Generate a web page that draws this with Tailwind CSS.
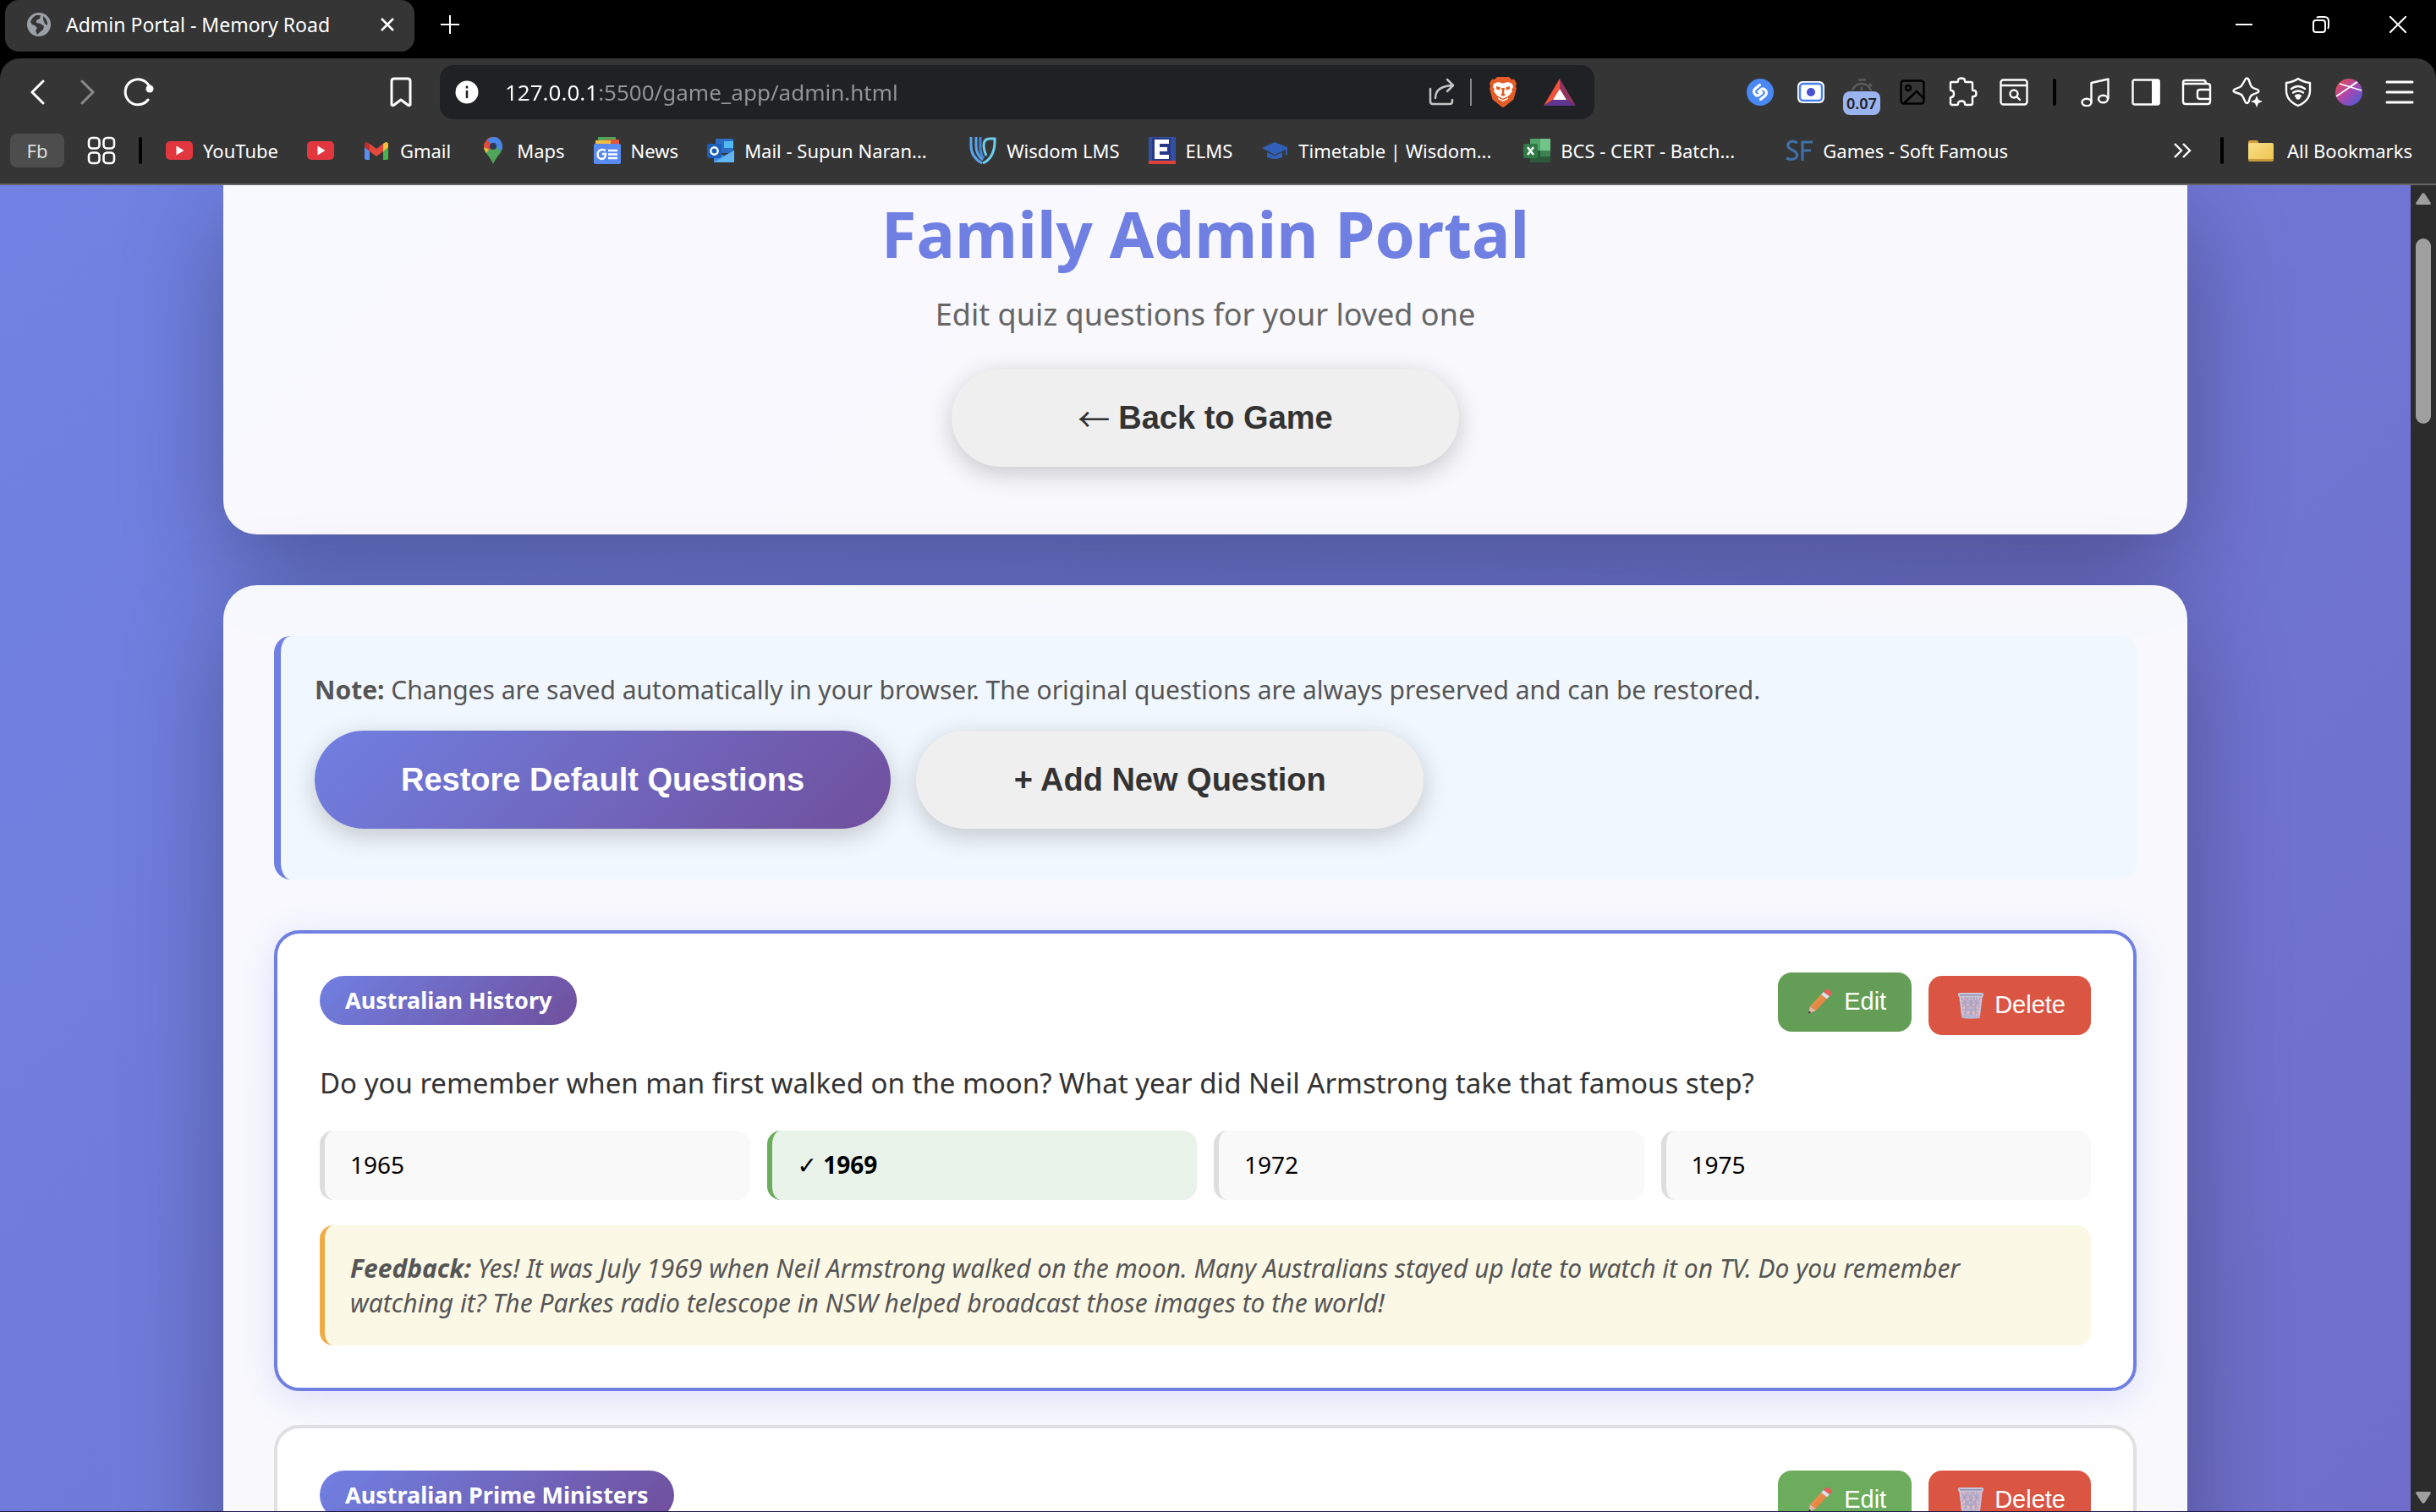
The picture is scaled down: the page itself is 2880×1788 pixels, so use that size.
<!DOCTYPE html>
<html lang="en">
<head>
<meta charset="utf-8">
<title>Admin Portal - Memory Road</title>
<script src="https://cdn.jsdelivr.net/npm/@tailwindcss/browser@4"></script>
</head>
<body class="flex h-screen flex-col overflow-hidden bg-black font-['Noto_Sans',sans-serif]">

<!-- shared symbols -->
<svg class="absolute size-0" aria-hidden="true">
  <defs>
    <linearGradient id="pencilBody" x1="0" y1="0" x2="1" y2="1"><stop offset="0" stop-color="#f09a55"/><stop offset="1" stop-color="#de7a3a"/></linearGradient>
    <linearGradient id="folderFill" x1="0" y1="0" x2="1" y2="1"><stop offset="0" stop-color="#f8e08a"/><stop offset="1" stop-color="#edc44e"/></linearGradient>
    <linearGradient id="leoFill" x1="0" y1="0" x2="1" y2="1"><stop offset="0" stop-color="#e8503a"/><stop offset=".45" stop-color="#b445a8"/><stop offset="1" stop-color="#3a60e0"/></linearGradient>
    <symbol id="pencil" viewBox="0 0 40 32">
      <path d="M6 30l2-9 7 5z" fill="#e6b4a6"/><path d="M6 30l.8-3.6 2.6 1.9z" fill="#333"/>
      <path d="M8 21L21 7l7 5-13 14z" fill="url(#pencilBody)"/>
      <path d="M21 7l3-3 7 5-3 3.200z" fill="#dfe0f2"/>
      <path d="M24 4l2-2.500q2-1.500 5 .5t3 5L31 9z" fill="#e5605a"/>
    </symbol>
    <symbol id="trash" viewBox="0 0 40 32">
      <path d="M7 4l3 25q10 3 20 0l3-25z" fill="#e3b9c3"/>
      <path d="M9 7l14 22M15 6l13 20M22 6l9 13M31 7L17 29M25 6L12 26M18 6L9 19M13 5l2 25M27 5l-2 25M20 5v25M9 13h22M10 21h20" stroke="#a9a6c6" stroke-width="1.500" fill="none"/>
      <path d="M7 4l3 25M33 4l-3 25" stroke="#c4c2dc" stroke-width="2"/>
      <rect x="5" y="1" width="30" height="5" rx="2" fill="#c9c8de"/><rect x="7" y="3" width="26" height="1.500" fill="#8f8dab"/>
      <path d="M9 27h22l-.5 4q-10 1.500-21 0z" fill="#b9b6d4"/>
    </symbol>
    <symbol id="youtube" viewBox="0 0 32 32"><rect y="5" width="32" height="22" rx="5" fill="#e2373f"/><path d="M12.500 10.500v11l9-5.500z" fill="#fff"/></symbol>
  </defs>
</svg>

<!-- window title bar -->
<header class="flex h-[69px] shrink-0 items-start justify-between text-white">
  <div class="flex">
    <div class="ml-[6px] flex h-[61px] w-[484px] items-center rounded-2xl bg-[#353535] pr-[16px] pb-[3px] pl-[26px]">
      <svg class="size-[28px]" viewBox="0 0 28 28"><circle cx="14" cy="14" r="14" fill="#9aa0a6"/><path d="M4 11q2-6 7-8l5 0-1 4-4 2 0 3 5 1 4 3-1 4-4 3-3 3-2-5 2-3-3-3-3-1z" fill="#353535"/><path d="M19 4q6 5 5 11l-3-2-2-5z" fill="#353535"/></svg>
      <span class="ml-[18px] flex-1 text-[23px]">Admin Portal - Memory Road</span>
      <button class="flex size-8 items-center justify-center" aria-label="Close tab"><svg class="size-4" viewBox="0 0 16 16" stroke="#fff" stroke-width="2.500"><path d="M1 1l14 14M15 1L1 15"/></svg></button>
    </div>
    <button class="ml-[20px] flex h-[58px] w-[44px] items-center justify-center" aria-label="New tab"><svg class="size-[22px]" viewBox="0 0 22 22" stroke="#fff" stroke-width="2"><path d="M11 0v22M0 11h22"/></svg></button>
  </div>
  <div class="flex h-[58px]">
    <button class="flex w-[91px] items-center justify-center" aria-label="Minimize"><svg class="size-5" viewBox="0 0 20 20" stroke="#fff" stroke-width="2"><path d="M0 10h20"/></svg></button>
    <button class="flex w-[91px] items-center justify-center" aria-label="Restore"><svg class="size-5" viewBox="0 0 20 20" fill="none" stroke="#fff" stroke-width="2"><rect x="1" y="5" width="14" height="14" rx="3"/><path d="M5 2q1-1 3-1h6q5 0 5 5v6q0 2-1 3"/></svg></button>
    <button class="flex w-[91px] items-center justify-center" aria-label="Close"><svg class="size-5" viewBox="0 0 20 20" stroke="#fff" stroke-width="2"><path d="M0 0l20 20M20 0L0 20"/></svg></button>
  </div>
</header>

<!-- toolbar and bookmarks -->
<nav class="shrink-0 rounded-t-3xl border-b-2 border-[#666] bg-[#353535] text-white">
  <div class="flex h-[80px] items-center pr-[13px] pl-[14px]">
    <button class="flex w-[60px] justify-center" aria-label="Back"><svg class="h-[30px] w-[18px]" viewBox="0 0 18 30" fill="none" stroke="#fff" stroke-width="3" stroke-linecap="round" stroke-linejoin="round"><path d="M16 2L3 15l13 13"/></svg></button>
    <button class="flex w-[60px] justify-center" aria-label="Forward"><svg class="h-[30px] w-[18px]" viewBox="0 0 18 30" fill="none" stroke="#8a8a8a" stroke-width="3" stroke-linecap="round" stroke-linejoin="round"><path d="M2 2l13 13L2 28"/></svg></button>
    <button class="flex w-[60px] justify-center" aria-label="Reload"><svg class="size-[36px]" viewBox="0 0 36 36" fill="none" stroke="#fff" stroke-width="3" stroke-linecap="round"><path d="M29 27A15 15 0 1 1 31 12"/><circle cx="31" cy="14" r="3.500" fill="#fff" stroke-width="2"/></svg></button>
    <button class="mr-[16px] ml-[250px] flex w-[60px] justify-center" aria-label="Bookmark this page"><svg class="h-[36px] w-[26px]" viewBox="0 0 26 36" fill="none" stroke="#fff" stroke-width="3" stroke-linejoin="round"><path d="M2 5q0-3 3-3h16q3 0 3 3v28q-1 1.500-3 0l-8-6-8 6q-2 1.500-3 0z"/></svg></button>
    <div class="mr-[166px] flex h-[64px] flex-1 items-center rounded-2xl bg-[#202124] pr-[22px] pl-[18px]">
      <svg class="size-[28px]" viewBox="0 0 28 28"><circle cx="14" cy="14" r="13.500" fill="#fff"/><path d="M14 12v9M14 6.500v3" stroke="#202124" stroke-width="2.500"/></svg>
      <input aria-label="Address" value="127.0.0.1:5500/game_app/admin.html" class="ml-[31px] h-12 flex-1 bg-linear-to-r from-white from-[111px] to-[#93959a] to-[111px] bg-clip-text text-[26px] text-transparent outline-none">
      <button aria-label="Share"><svg class="size-[34px]" viewBox="0 0 34 34" fill="none" stroke="#c4c4c4" stroke-width="2.500" stroke-linecap="round" stroke-linejoin="round"><path d="M3 13v15q0 3 3 3h20q3 0 3-3v-2M9 24q0-14 20-15M23 2l7 7-7 7"/></svg></button>
      <span class="mx-[16px] h-8 w-[2px] bg-[#85878a]"></span>
      <button class="flex w-[42px] justify-center" aria-label="Brave Shields"><svg class="h-[36px] w-[32px]" viewBox="0 0 32 36"><path d="M9 0h14l3 3 3-.5 3 5-1 4 1 2-3.500 13L18 35q-2 1.500-4 0L3.500 26.500 0 13.500l1-2-1-4 3-5 3 .5z" fill="#e65c26"/><path d="M5 8l5-2 6 1.500L22 6l5 2 1 4-2 3 1 2-4 5-2 1 1 3-6 3-6-3 1-3-2-1-4-5 1-2-2-3z" fill="#fff"/><path d="M8 11l5 1.500-1 3-4-1zM24 11l-5 1.500 1 3 4-1zM14 13l1 6-2 2 3 2 3-2-2-2 1-6z" fill="#e65c26"/><path d="M11 24l5 2.500 5-2.500" stroke="#e65c26" stroke-width="1.500" fill="none"/></svg></button>
      <button class="ml-[27px]" aria-label="Rewards"><svg class="h-[32px] w-[38px]" viewBox="0 0 38 32"><path d="M19 0L0 32l11-7 8-13z" fill="#f2553a"/><path d="M19 0l19 32-11-7-8-13z" fill="#93345f"/><path d="M0 32h38l-11-7H11z" fill="#5f3690"/><path d="M19 12l8 13H11z" fill="#fff"/></svg></button>
    </div>
    <div class="flex items-center">
      <button class="flex w-[60px] justify-center" aria-label="Shazam"><svg class="size-8" viewBox="0 0 32 32" fill="none"><circle cx="16" cy="16" r="16" fill="#4a88f5"/><path d="M15.500 7.500l-5 4q-4 4 0 7.500 2 2 4.500 0l3-2.500M16.500 24.500l5-4q4-4 0-7.500-2-2-4.500 0l-3 2.500" stroke="#fff" stroke-width="3.200" stroke-linecap="round"/></svg></button>
      <button class="flex w-[60px] justify-center" aria-label="Screen recorder"><svg class="h-[26px] w-[32px]" viewBox="0 0 32 26"><rect width="32" height="26" rx="6" fill="#fff"/><rect x="3" y="3" width="26" height="20" rx="4" fill="#fff" stroke="#4880f0" stroke-width="2.500"/><circle cx="16" cy="13" r="5" fill="#4a50d0"/></svg></button>
      <button class="relative flex h-[60px] w-[60px] justify-center" aria-label="Timer"><svg class="mt-[14px] h-[14px] w-[26px]" viewBox="0 0 26 14" fill="none" stroke="#5a5a5a" stroke-width="2.500"><path d="M9 1.500h9M2 14q3-8 11-8t11 8M13 10v4M22 6l3 3"/></svg><span class="absolute top-[29px] left-[8px] flex h-[28px] w-[44px] items-center justify-center rounded-lg bg-[#9ab4f0] text-[18px] font-semibold text-[#202124]">0.07</span></button>
      <button class="flex w-[60px] justify-center" aria-label="Images"><svg class="size-[30px]" viewBox="0 0 30 30" fill="none" stroke="#000" stroke-width="2.400"><rect x="1.500" y="1.500" width="27" height="27" rx="3"/><circle cx="10" cy="10" r="3"/><path d="M5 28l15-14 9 9"/></svg></button>
      <button class="flex w-[60px] justify-center" aria-label="Extensions"><svg class="size-[36px]" viewBox="0 0 36 36" fill="none" stroke="#fff" stroke-width="2.400" stroke-linejoin="round"><path d="M4 6h7q1 0 1-1.500 0-3 4-3t4 3q0 1.500 1 1.500h6q2 0 2 2v7q0 1 1.500 1 3 0 3 3.500t-3 3.500q-1.500 0-1.500 1v7q0 2-2 2h-6q-1 0-1-1.500 0-3-4-3t-4 3q0 1.500-1 1.500H5q-2 0-2-2v-6q0-1 1-1 3 0 3-4t-3-4q-1 0-1-1V8q0-2 1-2z"/></svg></button>
      <button class="flex w-[60px] justify-center" aria-label="Search tabs"><svg class="size-[34px]" viewBox="0 0 34 32" fill="none" stroke="#fff" stroke-width="2.400" stroke-linecap="round"><rect x="1.500" y="1.500" width="31" height="29" rx="3"/><path d="M2 8h30M20 21l4 4"/><circle cx="17" cy="18" r="4.500"/></svg></button>
      <span class="mx-[16px] h-8 w-1 rounded-full bg-black"></span>
      <button class="flex w-[60px] justify-center" aria-label="Music"><svg class="size-[34px]" viewBox="0 0 34 34" fill="none" stroke="#fff" stroke-width="2.400" stroke-linejoin="round"><path d="M12.500 29V6l20-4.500V25"/><ellipse cx="7" cy="29" rx="5.500" ry="4.300"/><ellipse cx="26.500" cy="25" rx="5.500" ry="4.300"/></svg></button>
      <button class="flex w-[60px] justify-center" aria-label="Sidebar"><svg class="h-[32px] w-[34px]" viewBox="0 0 34 32" fill="none" stroke="#fff" stroke-width="2.400"><rect x="1.500" y="1.500" width="31" height="29" rx="2"/><path d="M24 1h8q1.500 0 1.500 2v26q0 2-1.500 2h-8z" fill="#fff" stroke="none"/></svg></button>
      <button class="flex w-[60px] justify-center" aria-label="Wallet"><svg class="h-[32px] w-[36px]" viewBox="0 0 36 32" fill="none" stroke="#fff" stroke-width="2.400" stroke-linejoin="round"><path d="M2 4q0-2 3-2h21q3 0 3 4M2 4v23q0 3 3 3h26q3 0 3-3V9q0-3-3-3H5Q2 6 2 4zM34 13H22q-3 0-3 3v5q0 3 3 3h12"/></svg></button>
      <button class="flex w-[60px] justify-center" aria-label="Leo AI"><svg class="size-[36px]" viewBox="0 0 36 36" fill="none" stroke="#fff" stroke-width="2.400" stroke-linejoin="round"><path d="M15.500 3q2-3 4 0l2.500 7q1 2 3 3l5 2q3 1.500 0 3.500l-5 2q-3 1-4 4l-1.500 5q-2 3-4 0L13 24q-1-3-4-4l-6-2q-3-1.500 0-3.500L9 12q2-1 3-3z"/><path d="M29 22l2 5 5 2-5 2-2 5-2-5-5-2 5-2z" fill="#fff" stroke="none"/></svg></button>
      <button class="flex w-[60px] justify-center" aria-label="VPN"><svg class="size-[36px]" viewBox="0 0 36 36" fill="none" stroke="#fff" stroke-width="2.400" stroke-linecap="round" stroke-linejoin="round"><path d="M18 2q6 4 14 5v9q0 12-14 18Q4 28 4 16V7q8-1 14-5z"/><path d="M10 14q8-6 16 0M12 18.500q6-4 12 0M15 22.500q3-2 6 0"/><circle cx="18" cy="24" r="1.500" fill="#fff"/></svg></button>
      <button class="flex w-[60px] justify-center" aria-label="Profile"><svg class="size-8" viewBox="0 0 32 32" fill="none" stroke="#fff" stroke-width="1.800"><circle cx="16" cy="16" r="16" fill="url(#leoFill)" stroke="none"/><path d="M5 6l26 8M1 21L26 4M17 10l8-6"/></svg></button>
      <button class="flex w-[60px] justify-center" aria-label="Menu"><svg class="h-[28px] w-[34px]" viewBox="0 0 34 28" stroke="#fff" stroke-width="3" stroke-linecap="round"><path d="M2 2h30M2 14h30M2 26h30"/></svg></button>
    </div>
  </div>

  <div class="flex h-[68px] items-center justify-between pr-[28px] pb-[10px] pl-[12px] text-[22px]">
    <div class="flex items-center gap-[34px]">
      <div class="flex items-center">
        <button class="h-[40px] w-[64px] rounded-lg bg-[#4d4d4d] text-[#ddd]">Fb</button>
        <button class="ml-[26px]" aria-label="Apps"><svg class="size-[36px]" viewBox="0 0 36 36" fill="none" stroke="#fff" stroke-width="2.600"><rect x="3" y="3" width="12.500" height="12.500" rx="4"/><rect x="20.500" y="3" width="12.500" height="12.500" rx="4"/><rect x="3" y="20.500" width="12.500" height="12.500" rx="4"/><rect x="20.500" y="20.500" width="12.500" height="12.500" rx="4"/></svg></button>
        <span class="-mr-[6px] ml-[26px] h-8 w-1 rounded-full bg-black"></span>
      </div>
      <a href="#" class="flex items-center gap-3"><svg class="size-8"><use href="#youtube"/></svg>YouTube</a>
      <a href="#" aria-label="YouTube"><svg class="size-8"><use href="#youtube"/></svg></a>
      <a href="#" class="flex items-center gap-3"><svg class="size-8" viewBox="0 0 32 32"><path d="M2 9v16q0 2 2 2h4V14z" fill="#5b8def"/><path d="M30 9v16q0 2-2 2h-4V14z" fill="#4caf50"/><path d="M24 8l3-2q3 0 3 3v3l-6 5z" fill="#f5c13b"/><path d="M2 12V9q0-3 3-3l3 2v9z" fill="#b8322b"/><path d="M8 8l8 6 8-6v9l-8 6-8-6z" fill="#e2483c"/></svg>Gmail</a>
      <a href="#" class="flex items-center gap-3"><svg class="size-8" viewBox="0 0 32 32"><path d="M5 11q0 6 5 11 4 5 6 10 2-5 6-10 5-5 5-11z" fill="#4fa65a"/><path d="M5 11q0 4 3 8l9-12-8-3q-4 3-4 7z" fill="#f3bd42"/><path d="M8 4q-3 3-3 8l7 3 8-14Q12-2 8 4z" fill="#e2483c"/><path d="M9 4q5-6 13-3l-6 10z" fill="#4a86e8"/><path d="M20 1q6 2 7 9 0 4-2 7l-7-8z" fill="#4a86e8"/><circle cx="16" cy="11" r="4" fill="#2d3b55"/></svg>Maps</a>
      <a href="#" class="flex items-center gap-3"><svg class="size-8" viewBox="0 0 32 32"><rect x="5" y="0" width="21" height="12" fill="#4fa65a"/><rect x="13" y="3" width="17" height="12" fill="#e2553c"/><rect x="2" y="4" width="18" height="10" fill="#f3bd42"/><rect y="8" width="32" height="24" rx="2" fill="#5a8bf0"/><path d="M14 16q-6-3-9 2-2 7 4 8 5 0 5-6H10M17 16h11M17 20.500h11M17 25h11" stroke="#fff" stroke-width="2.400" fill="none"/></svg>News</a>
      <a href="#" class="flex items-center gap-3"><svg class="size-8" viewBox="0 0 32 32"><rect x="10" y="2" width="21" height="17" fill="#2b6cc4"/><rect x="20" y="5" width="11" height="8" fill="#52b9f0"/><path d="M8 16l12 6 12-6v14H8z" fill="#3a8fe0"/><path d="M8 30l24-14v14z" fill="#63b5f2"/><rect y="8" width="17" height="17" rx="2" fill="#1c5fb8"/><circle cx="8.500" cy="16.500" r="4.200" fill="none" stroke="#fff" stroke-width="2.400"/></svg><span class="w-[232px] whitespace-nowrap">Mail - Supun Naran...</span></a>
      <a href="#" class="flex items-center gap-3"><svg class="size-8" viewBox="0 0 32 32" fill="none" stroke-width="3"><path d="M2 0v10q0 14 13 21" stroke="#5aa3ea"/><path d="M8 0v10q0 11 8 17" stroke="#5aa3ea"/><path d="M16 31Q31 24 30 2h-6q-7 0-7 8 0 6 3 12" stroke="#6cd0ee"/><path d="M13 0v12q0 8 4 13" stroke="#4486d8"/></svg>Wisdom LMS</a>
      <a href="#" class="flex items-center gap-3"><svg class="size-8" viewBox="0 0 32 32"><rect width="32" height="32" fill="#3450a0"/><rect x="4" y="1" width="22" height="27" fill="#26388a"/><path d="M7 3h17v5H13v4h9v5h-9v4h11v5H7z" fill="#fff"/><rect y="28" width="32" height="4" fill="#e04038"/></svg>ELMS</a>
      <a href="#" class="flex items-center gap-3"><svg class="size-8" viewBox="0 0 32 32" fill="#3260b8"><path d="M16 6l15 6v9h-2v-6l-13 6L1 13z"/><path d="M7 18l9 4 9-4v6q-9 4-18 0z"/></svg><span class="w-[232px] whitespace-nowrap">Timetable | Wisdom...</span></a>
      <a href="#" class="flex items-center gap-3"><svg class="size-8" viewBox="0 0 32 32"><rect x="8" y="2" width="12" height="14" fill="#52a36c"/><rect x="20" y="2" width="12" height="14" fill="#70c48a"/><rect x="8" y="16" width="12" height="14" fill="#2c5a3a"/><rect x="20" y="16" width="12" height="7" fill="#3c8452"/><rect x="20" y="23" width="12" height="7" fill="#2c5a3a"/><rect y="8" width="17" height="17" rx="2" fill="#2f7a45"/><path d="M5 12l7 9M12 12l-7 9" stroke="#fff" stroke-width="2.400"/></svg><span class="w-[232px] whitespace-nowrap">BCS - CERT - Batch...</span></a>
      <a href="#" class="flex items-center gap-3"><svg class="size-8" viewBox="0 0 32 32" fill="none" stroke="#3f70a8" stroke-width="3.200"><path d="M14 7Q9 4 5 6q-4 3-1 7l7 4q5 4 1 8-5 3-11 0M20 28V6h12M20 16h10"/></svg>Games - Soft Famous</a>
    </div>
    <div class="flex items-center">
      <button aria-label="More bookmarks"><svg class="h-[18px] w-[22px]" viewBox="0 0 22 18" fill="none" stroke="#fff" stroke-width="2.400"><path d="M2 1l8 8-8 8M12 1l8 8-8 8"/></svg></button>
      <span class="ml-[34px] h-8 w-1 rounded-full bg-black"></span>
      <a href="#" class="ml-[28px] flex items-center gap-[15px]"><svg class="size-8" viewBox="0 0 32 32"><path d="M1 6q0-2 2-2h8q2 0 2 3h4v8H1z" fill="#d9a03c"/><rect x="1" y="7" width="30" height="21" rx="2" fill="url(#folderFill)"/><path d="M1 26v1q0 2 2 2h26q2 0 2-2v-1z" fill="#c99a3c"/></svg>All Bookmarks</a>
    </div>
  </div>
</nav>

<!-- page viewport -->
<div class="flex min-h-0 flex-1 overflow-hidden border-b border-[#1c1846]">
  <main class="flex-1 overflow-hidden bg-[linear-gradient(135deg,#7082e3,#706eca)]">
    <div class="mx-auto flex max-w-[2322px] flex-col gap-[60px]">

      <section class="flex flex-col items-center rounded-b-[40px] bg-white/95 pt-[5px] pb-20 shadow-[0_40px_120px_rgba(0,0,0,0.3)]">
        <h1 class="text-[76px] leading-[104px] font-bold text-[#7080e2]">Family Admin Portal</h1>
        <p class="mt-4 text-[36px] leading-[56px] text-[#666]">Edit quiz questions for your loved one</p>
        <button class="mt-9 flex h-[116px] w-[600px] items-center justify-center gap-[10px] rounded-full bg-[#efefef] font-['Liberation_Sans',sans-serif] text-[38px] font-bold text-[#333] shadow-[0_8px_30px_rgba(0,0,0,0.2)]"><span class="font-['Noto_Sans_CJK_JP',sans-serif] leading-none font-normal">←</span>Back to Game</button>
      </section>

      <section class="rounded-t-[40px] bg-white/95 px-[60px] pt-[60px] shadow-[0_40px_120px_rgba(0,0,0,0.3)]">
        <div class="rounded-[20px] border-l-8 border-[#7080e2] bg-[#f1f7fe] px-10 pt-10 pb-[60px]">
          <p class="text-[30px] leading-[48px] text-[#555]"><strong>Note:</strong> Changes are saved automatically in your browser. The original questions are always preserved and can be restored.</p>
          <div class="mt-6 flex gap-[30px] font-['Liberation_Sans',sans-serif] text-[38px] font-bold">
            <button class="h-[116px] rounded-full bg-[linear-gradient(135deg,#7080e2,#704f9c)] px-[102px] text-white shadow-[0_8px_30px_rgba(0,0,0,0.2)]">Restore Default Questions</button>
            <button class="h-[116px] w-[600px] rounded-full bg-[#efefef] text-[#333] shadow-[0_8px_30px_rgba(0,0,0,0.2)]">+ Add New Question</button>
          </div>
        </div>

        <article class="mt-[60px] rounded-[30px] border-4 border-[#7080e2] bg-white p-[50px] shadow-[0_8px_40px_rgba(112,128,226,0.2)]">
          <div class="flex items-start justify-between">
            <span class="flex h-[58px] items-center rounded-full bg-[linear-gradient(135deg,#7080e2,#704f9c)] px-[30px] text-[27px] font-bold text-white">Australian History</span>
            <div class="flex gap-5 font-['Liberation_Sans',sans-serif] text-[29px] text-white">
              <button class="flex h-[70px] -translate-y-1 items-center gap-2 rounded-2xl bg-[#649e56] px-[30px]"><svg class="h-8 w-10"><use href="#pencil"/></svg>Edit</button>
              <button class="flex h-[70px] items-center gap-2 rounded-2xl bg-[#da5542] px-[30px]"><svg class="h-8 w-10"><use href="#trash"/></svg>Delete</button>
            </div>
          </div>
          <p class="mt-[30px] text-[33px] leading-[53px] text-[#333]">Do you remember when man first walked on the moon? What year did Neil Armstrong take that famous step?</p>
          <ul class="mt-[30px] grid grid-cols-4 gap-5 text-[28px] leading-[40px] text-black">
            <li class="rounded-2xl border-l-6 border-[#ddd] bg-[#f9f9f9] px-[30px] py-5">1965</li>
            <li class="rounded-2xl border-l-6 border-[#6cac5d] bg-[#e9f3e9] px-[30px] py-5 font-bold"><span class="font-['DejaVu_Sans',sans-serif]">✓</span> 1969</li>
            <li class="rounded-2xl border-l-6 border-[#ddd] bg-[#f9f9f9] px-[30px] py-5">1972</li>
            <li class="rounded-2xl border-l-6 border-[#ddd] bg-[#f9f9f9] px-[30px] py-5">1975</li>
          </ul>
          <p class="mt-[30px] rounded-2xl border-l-6 border-[#eeab48] bg-[#fcf8e6] p-[30px] text-[30px] leading-[41px] text-[#555] italic"><strong>Feedback:</strong> Yes! It was July 1969 when Neil Armstrong walked on the moon. Many Australians stayed up late to watch it on TV. Do you remember watching it? The Parkes radio telescope in NSW helped broadcast those images to the world!</p>
        </article>

        <article class="mt-10 rounded-[30px] border-4 border-[#e0e0e0] bg-white p-[50px]">
          <div class="flex items-start justify-between">
            <span class="flex h-[58px] items-center rounded-full bg-[linear-gradient(135deg,#7080e2,#704f9c)] px-[30px] text-[27px] font-bold text-white">Australian Prime Ministers</span>
            <div class="flex gap-5 font-['Liberation_Sans',sans-serif] text-[29px] text-white">
              <button class="flex h-[70px] items-center gap-2 rounded-2xl bg-[#6cac5d] px-[30px]"><svg class="h-8 w-10"><use href="#pencil"/></svg>Edit</button>
              <button class="flex h-[70px] items-center gap-2 rounded-2xl bg-[#da5542] px-[30px]"><svg class="h-8 w-10"><use href="#trash"/></svg>Delete</button>
            </div>
          </div>
        </article>
      </section>
    </div>
  </main>

  <!-- scrollbar -->
  <div class="flex w-[30px] flex-col items-center bg-[#2c2c2c] pt-[9px] pb-[9px]">
    <svg class="h-[14px] w-[18px]" viewBox="0 0 18 14" fill="#9f9f9f"><path d="M7 1.500q2-2.500 4 0l6.500 10q1 2.500-1.500 2.500H2q-2.500 0-1.500-2.500z"/></svg>
    <div class="mt-[40px] h-[219px] w-[18px] rounded-full bg-[#9f9f9f]"></div>
    <svg class="mt-auto h-[14px] w-[18px]" viewBox="0 0 18 14" fill="#9f9f9f"><path d="M7 12.500q2 2.500 4 0l6.500-10Q18.500 0 16 0H2q-2.500 0-1.500 2.500z"/></svg>
  </div>
</div>
</body>
</html>
